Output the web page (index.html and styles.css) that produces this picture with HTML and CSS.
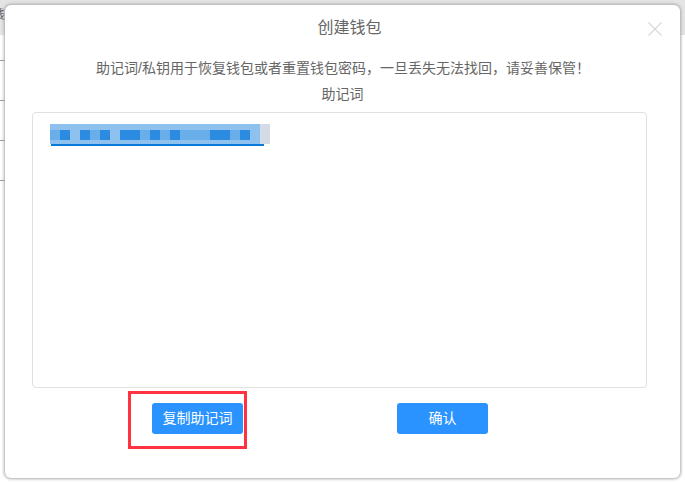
FILE: index.html
```html
<!DOCTYPE html>
<html lang="zh">
<head>
<meta charset="utf-8">
<title>创建钱包</title>
<link rel="stylesheet" href="styles.css">
</head>
<body>
<div class="backdrop">
  <div class="back-head"><span class="back-glyph">钱</span></div>
  <div class="back-row back-row-first"></div>
  <div class="back-row"></div>
  <div class="back-row"></div>
  <div class="back-row"></div>
</div>
<main class="dialog">
  <header class="dialog-head">
    <h1 class="dialog-title">创建钱包</h1>
    <svg class="close" viewBox="0 0 14 14" width="14" height="14"><path d="M.5.5l13 13M13.5.5l-13 13" stroke="#d9d9d9" stroke-width="1.2" fill="none"/></svg>
  </header>
  <p class="notice">助记词/私钥用于恢复钱包或者重置钱包密码，一旦丢失无法找回，请妥善保管！</p>
  <p class="label">助记词</p>
  <section class="words">
    <svg class="mosaic" width="220" height="22" viewBox="0 0 220 22">
      <rect class="soft" x="0" y="0" width="210" height="20" fill="#8fc1ee"/>
      <rect class="soft" x="210" y="0" width="10" height="20" fill="#d4dbe6"/>
      <g class="soft" fill="#6aaee9">
        <rect x="0" y="6" width="10" height="10"/>
        <rect x="40" y="6" width="10" height="10"/>
        <rect x="90" y="6" width="10" height="10"/>
        <rect x="110" y="6" width="10" height="10"/>
        <rect x="130" y="6" width="30" height="10"/>
        <rect x="180" y="6" width="10" height="10"/>
      </g>
      <g class="soft" fill="#2a8be0">
        <rect x="10" y="6" width="10" height="10"/>
        <rect x="30" y="6" width="10" height="10"/>
        <rect x="50" y="6" width="10" height="10"/>
        <rect x="70" y="6" width="20" height="10"/>
        <rect x="100" y="6" width="10" height="10"/>
        <rect x="120" y="6" width="10" height="10"/>
        <rect x="160" y="6" width="20" height="10"/>
        <rect x="190" y="6" width="10" height="10"/>
      </g>
      <rect x="1" y="20" width="213" height="2" fill="#0a78d7"/>
    </svg>
  </section>
  <footer class="actions">
    <div class="action-slot">
      <button class="btn">复制助记词</button>
      <span class="mark"></span>
    </div>
    <div class="action-slot">
      <button class="btn">确认</button>
    </div>
  </footer>
</main>
</body>
</html>
```
FILE: styles.css
```css
* { box-sizing: border-box; }
html, body { margin: 0; height: 100%; }
body {
  position: relative;
  width: 685px;
  height: 483px;
  overflow: hidden;
  background: #fff;
  font-family: "Liberation Sans", "Noto Sans CJK SC", sans-serif;
  color: #666;
}
.backdrop { position: absolute; inset: 0; }
.back-head {
  height: 35px;
  background: #e4e4e4;
  overflow: hidden;
  font-size: 12px;
  line-height: 30px;
  color: #666;
}
.back-glyph { margin-left: -7px; }
.back-row {
  width: 5px;
  height: 40px;
  border-bottom: 1px solid #999;
}
.back-row-first { height: 26px; }
.dialog {
  position: absolute;
  left: 5px;
  top: 5px;
  width: 675px;
  height: 473px;
  background: #fff;
  border-radius: 6px;
  box-shadow: 0 0 3px 1px #aaa;
  padding: 0 33px 0 27px;
  display: flex;
  flex-direction: column;
}
.dialog-head {
  position: relative;
  height: 45px;
  display: flex;
  align-items: center;
  justify-content: center;
}
.dialog-title {
  margin: 0 0 3px 20px;
  font-size: 16px;
  font-weight: normal;
  color: #666;
}
.close {
  position: absolute;
  right: -15px;
  top: 17px;
}
.notice {
  margin: 8px 0 0 7px;
  font-size: 14px;
  line-height: 20px;
  text-align: center;
  white-space: nowrap;
}
.label {
  margin: 6px 0 0 6px;
  font-size: 14px;
  line-height: 20px;
  text-align: center;
}
.words {
  margin-top: 8px;
  height: 276px;
  border: 1px solid #e0e0e0;
  border-radius: 4px;
  padding: 11px 17px;
}
.mosaic { display: block; }
.soft { filter: blur(0.5px); }
.actions {
  display: flex;
  margin-top: 15px;
}
.action-slot {
  position: relative;
  margin-left: 120px;
}
.action-slot + .action-slot { margin-left: 154px; }
.btn {
  display: block;
  width: 91px;
  height: 31px;
  border: 0;
  border-radius: 3px;
  background: #2a93ff;
  color: #fff;
  font: 14px "Liberation Sans", "Noto Sans CJK SC", sans-serif;
  padding: 0 0 3px;
}
.mark {
  position: absolute;
  left: -24px;
  top: -12px;
  width: 119px;
  height: 58px;
  border: 3px solid #ff3340;
}
```
